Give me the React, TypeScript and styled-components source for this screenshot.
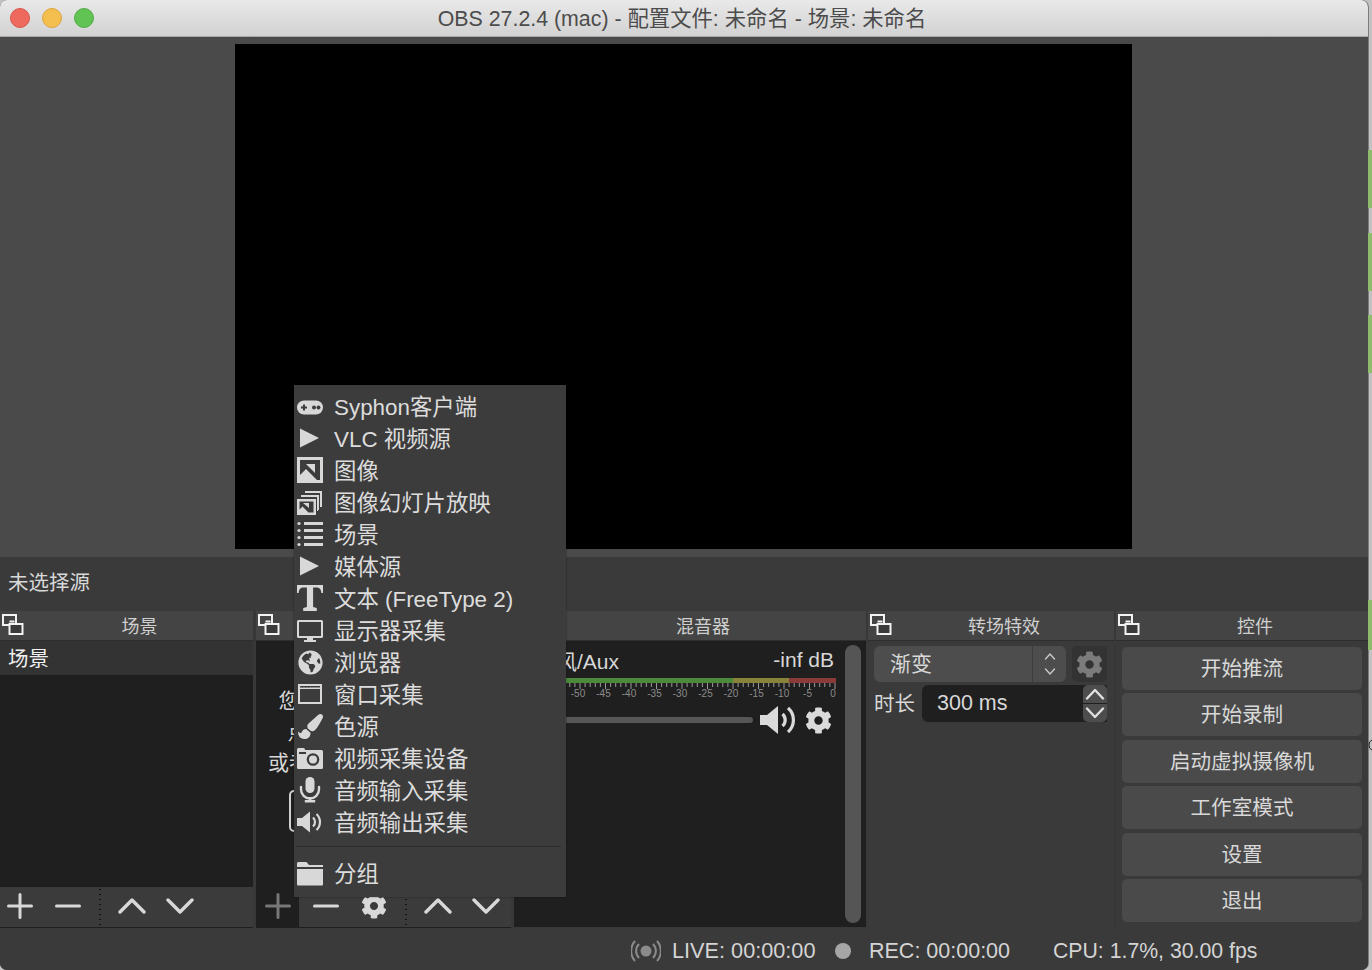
import React from "react";
import styled, { createGlobalStyle } from "styled-components";
import { FaCog, FaGlobeAmericas, FaPaintBrush } from "react-icons/fa";

const Global = createGlobalStyle`
  html, body { margin: 0; padding: 0; background: #bfbfbf; overflow: hidden; }
  body { font-family: "Liberation Sans", "Noto Sans CJK SC", sans-serif; }
  * { box-sizing: border-box; }
`;

const Page = styled.div`
  position: relative;
  display: flex;
  width: 1372px;
  height: 970px;
  background: #c2c2c2;
`;
const Window = styled.div`
  width: 1368px;
  height: 970px;
  display: flex;
  flex-direction: column;
  border-radius: 7px;
  overflow: hidden;
  background: #3a3a3a;
  box-shadow: 1px 0 0 #7d7d7d;
`;
const TitleBar = styled.div`
  height: 37px;
  flex: none;
  display: flex;
  align-items: center;
  padding: 0 98px 1px 10px;
  background: linear-gradient(#e9e9e9, #d2d2d2);
  border-bottom: 1px solid #a9a9a9;
`;
const Lights = styled.div`
  display: flex;
  gap: 12px;
`;
const Light = styled.span<{ $c: string; $b: string }>`
  width: 20px;
  height: 20px;
  border-radius: 50%;
  background: ${(p) => p.$c};
  border: 1px solid ${(p) => p.$b};
`;
const Title = styled.div`
  flex: 1;
  padding-bottom: 2px;
  text-align: center;
  font-size: 21.35px;
  color: #4c4c4c;
`;
const Preview = styled.div`
  height: 520px;
  flex: none;
  background: #4a4a4a;
  padding: 7px 0 0 235px;
`;
const Canvas = styled.div`
  width: 897px;
  height: 505px;
  background: #000;
`;
const ContextBar = styled.div`
  height: 54px;
  flex: none;
  display: flex;
  align-items: center;
  padding: 0 8px 7px;
  background: #3a3a3a;
  font-size: 20.5px;
  color: #d8d8d8;
`;
const Docks = styled.div`
  height: 317px;
  flex: none;
  display: flex;
  background: #383838;
`;
const Dock = styled.section<{ $w: number; $ml?: number }>`
  width: ${(p) => p.$w}px;
  margin-left: ${(p) => p.$ml ?? 0}px;
  flex: none;
  display: flex;
  flex-direction: column;
`;
const DockHead = styled.header`
  position: relative;
  height: 30px;
  flex: none;
  padding: 0 0 2px 26px;
  display: flex;
  align-items: center;
  justify-content: center;
  background: #444;
  border-bottom: 1px solid #2e2e2e;
  font-size: 18px;
  color: #cfcfcf;
`;
const FloatIcon = styled.svg`
  position: absolute;
  left: 0;
  top: 1px;
  width: 25px;
  height: 25px;
`;
const DarkBody = styled.div`
  flex: 1;
  min-height: 0;
  display: flex;
  flex-direction: column;
  background: #1f1f1f;
  overflow: hidden;
`;
const SceneRow = styled.div`
  height: 34px;
  flex: none;
  display: flex;
  align-items: center;
  padding: 0 0 2px 8px;
  background: #333;
  font-size: 20.5px;
  color: #f0f0f0;
`;
const Spacer = styled.div`
  flex: 1;
`;
const Toolbar = styled.div`
  height: 40px;
  flex: none;
  margin-bottom: 1px;
  display: flex;
  align-items: center;
  gap: 8px;
  background: #3b3b3b;
`;
const ToolBtn = styled.div<{ $pressed?: boolean }>`
  width: ${(p) => (p.$pressed ? 43 : 40)}px;
  margin-right: ${(p) => (p.$pressed ? -1 : 0)}px;
  height: 100%;
  padding-bottom: 2px;
  flex: none;
  display: flex;
  align-items: center;
  justify-content: center;
  color: ${(p) => (p.$pressed ? "#777" : "#d8d8d8")};
  background: ${(p) => (p.$pressed ? "#1f1f1f" : "transparent")};
`;
const ToolSep = styled.div`
  width: 8px;
  height: 100%;
  flex: none;
  background: radial-gradient(circle, #111 0.8px, transparent 1px) center top / 2px 5px repeat-y;
`;
const EmptyHint = styled.div`
  padding-top: 44px;
  display: flex;
  flex-direction: column;
  align-items: center;
  text-align: center;
  font-size: 21px;
  line-height: 31px;
  color: #d8d8d8;
  white-space: nowrap;
`;
const HintBox = styled.div`
  width: 190px;
  height: 42px;
  margin-top: 12px;
  border: 2px solid #d0d0d0;
  border-radius: 5px;
`;
const MixerBody = styled(DarkBody)`
  flex-direction: row;
  margin-bottom: 1px;
`;
const Channel = styled.div`
  width: 331px;
  padding: 8px 0 0 8px;
  display: flex;
  flex-direction: column;
`;
const ChannelHead = styled.div`
  height: 26px;
  padding: 0 11px 4px 0;
  display: flex;
  justify-content: space-between;
  align-items: center;
  font-size: 21px;
  color: #d8d8d8;
`;
const ChannelName = styled.span`
  margin-left: -8px;
`;
const Meter = styled.div`
  display: flex;
  width: 314px;
  height: 5px;
  margin-top: 3px;
`;
const MeterPart = styled.div<{ $w: number; $c: string }>`
  width: ${(p) => p.$w}px;
  background: ${(p) => p.$c};
`;
const Scale = styled.svg`
  display: block;
  width: 314px;
  height: 16px;
`;
const FaderRow = styled.div`
  height: 30px;
  margin-top: 6px;
  display: flex;
  align-items: center;
  color: #dadada;
`;
const FaderTrack = styled.div`
  width: 231px;
  height: 6px;
  margin-right: 7px;
  border-radius: 3px;
  background: #565656;
`;
const GearSlot = styled.div`
  margin-left: 9px;
  display: flex;
`;
const ScrollThumb = styled.div`
  width: 16px;
  margin: 4px 0 4px 0;
  border-radius: 8px;
  background: #555;
`;
const TransBody = styled.div`
  flex: 1;
  padding: 5px 7px 0 6px;
  background: #3a3a3a;
  display: flex;
  flex-direction: column;
  gap: 3px;
`;
const TransRow = styled.div`
  display: flex;
  align-items: center;
`;
const Select = styled.div`
  width: 192px;
  height: 36px;
  display: flex;
  background: #4d4d4d;
  border-radius: 6px;
  font-size: 21px;
  color: #d8d8d8;
`;
const SelectText = styled.div`
  width: 159px;
  padding: 0 0 4px 16px;
  display: flex;
  align-items: center;
  border-right: 1px solid #3c3c3c;
`;
const SelectArrows = styled.div`
  flex: 1;
  display: flex;
  align-items: center;
  justify-content: center;
`;
const GearButton = styled.div`
  width: 35px;
  height: 36px;
  margin-left: 6px;
  display: flex;
  align-items: center;
  justify-content: center;
  background: #333;
  border-radius: 5px;
  color: #7b7b7b;
`;
const FieldLabel = styled.div`
  width: 48px;
  padding-bottom: 4px;
  font-size: 20.5px;
  color: #d8d8d8;
`;
const SpinField = styled.div`
  width: 161px;
  height: 37px;
  display: flex;
  align-items: center;
  padding: 0 0 1px 15px;
  background: #1f1f1f;
  border-radius: 6px 0 0 6px;
  font-size: 21.5px;
  color: #d8d8d8;
`;
const SpinButtons = styled.div`
  width: 24px;
  height: 37px;
  display: flex;
  flex-direction: column;
  gap: 1px;
  background: #1f1f1f;
`;
const SpinButton = styled.div<{ $top?: boolean }>`
  flex: 1;
  display: flex;
  align-items: center;
  justify-content: center;
  background: #4d4d4d;
  color: #e0e0e0;
  border-radius: ${(p) => (p.$top ? "5px 5px 0 0" : "0 0 5px 5px")};
`;
const ControlBody = styled.div`
  flex: 1;
  min-height: 0;
  padding: 6px;
  background: #3a3a3a;
  display: grid;
  grid-template-rows: repeat(6, 1fr);
  gap: 3.5px;
`;
const ControlButton = styled.div`
  display: flex;
  align-items: center;
  justify-content: center;
  padding-bottom: 3px;
  background: #4a4a4a;
  border-radius: 5px;
  font-size: 20.6px;
  color: #d8d8d8;
`;
const StatusBar = styled.footer`
  height: 42px;
  flex: none;
  display: flex;
  align-items: center;
  padding-left: 631px;
  padding-top: 4px;
  background: #3a3a3a;
  color: #d4d4d4;
  white-space: nowrap;
`;
const StatusText = styled.span<{ $w: number; $ml: number; $fs: number }>`
  width: ${(p) => p.$w}px;
  margin-left: ${(p) => p.$ml}px;
  font-size: ${(p) => p.$fs}px;
  flex: none;
`;
const RecDot = styled.span`
  width: 16px;
  height: 16px;
  margin-left: 19px;
  border-radius: 50%;
  background: #a6a6a6;
`;
const DesktopMark = styled.div<{ $top: number; $h: number }>`
  position: absolute;
  left: 1368px;
  width: 4px;
  top: ${(p) => p.$top}px;
  height: ${(p) => p.$h}px;
  background: #8fbb6d;
`;
const Cursor = styled.svg`
  position: absolute;
  left: 1368px;
  top: 738px;
  width: 4px;
  height: 14px;
`;
const Menu = styled.div`
  position: absolute;
  left: 294px;
  top: 385px;
  width: 272px;
  height: 512px;
  padding: 5px 0 7px;
  background: #3c3c3c;
  box-shadow: 0 0 2px rgba(0, 0, 0, 0.4);
`;
const MenuRow = styled.div`
  height: 32px;
  display: flex;
  align-items: center;
  gap: 11px;
  padding-left: 3px;
  font-size: 22.4px;
  color: #dcdcdc;
  white-space: nowrap;
`;
const MenuLabel = styled.span`
  padding-bottom: 3px;
`;
const MenuIcon = styled.div`
  width: 26px;
  height: 26px;
  flex: none;
  display: flex;
  align-items: center;
  justify-content: center;
  color: #d8d8d8;
`;
const MenuSep = styled.div`
  height: 1px;
  margin: 8px 5px 10px 2px;
  background: #2c2c2c;
`;

const S = (p: { children: React.ReactNode }) => (
  <svg width="26" height="26" viewBox="0 0 26 26" fill="currentColor">
    {p.children}
  </svg>
);

const D = "#3c3c3c";
const Icons: Record<string, React.ReactNode> = {
  pad: (
    <S>
      <rect x="0" y="7.500" width="26" height="14" rx="7" />
      <path d="M4 13.500h2v-2h2v2h2v2H8v2H6v-2H4z" fill={D} />
      <circle cx="17" cy="14.500" r="2" fill={D} />
      <circle cx="21.500" cy="14.500" r="2" fill={D} />
    </S>
  ),
  play: (
    <S>
      <path d="M3 3.500 22 13 3 22.500z" />
    </S>
  ),
  image: (
    <S>
      <path fillRule="evenodd" d="M0 0h26v26H0zM3 3v15l6-6 11 11h3V3z" />
      <path d="M9 7h9v9z" />
    </S>
  ),
  images: (
    <S>
      <path d="M0 10h19v16H0z" />
      <path d="M2.500 12.500v8l3-3 6 6h5v-11z" fill={D} />
      <path d="M6 14h6v5z" />
      <path d="M4 8V6h17v16h-1V8zM8 4V2h17v16h-2V4z" />
      <path d="M23 2h2v15h-2zM21 6h1v15h-1z" />
    </S>
  ),
  list: (
    <S>
      <circle cx="2" cy="2.500" r="1.600" />
      <circle cx="2" cy="9.500" r="1.600" />
      <circle cx="2" cy="16.500" r="1.600" />
      <circle cx="2" cy="23.500" r="1.600" />
      <path d="M7 1h19v3H7zM7 8h19v3H7zM7 15h19v3H7zM7 22h19v3H7z" />
    </S>
  ),
  text: (
    <S>
      <path d="M0 0h26v8h-1.600c-.3-3.200-1.600-5.400-5-5.400h-3.300v19.500l3.700.9V26H6.200v-3l3.700-.9V2.600H6.600c-3.400 0-4.700 2.200-5 5.400H0z" />
    </S>
  ),
  monitor: (
    <S>
      <path
        fillRule="evenodd"
        d="M1.500 3h23a1.500 1.500 0 0 1 1.500 1.500v15a1.500 1.500 0 0 1-1.500 1.500H16v2h3v2H7v-2h3v-2H1.500A1.500 1.500 0 0 1 0 19.500v-15A1.500 1.500 0 0 1 1.500 3zM2 5v14h22V5z"
      />
    </S>
  ),
  window: (
    <S>
      <path fillRule="evenodd" d="M1 3h24v20H1zM3 8v13h20V8zM3 5v1.500h20V5z" />
      <path d="M5 5h1v1.500H5zM8 5h1v1.500H8zM11 5h1v1.500h-1z" fill={D} />
    </S>
  ),
  camera: (
    <S>
      <path d="M0 5V4.500A1.500 1.500 0 0 1 1.500 3h5A1.500 1.500 0 0 1 8 4.500V5h16.500A1.500 1.500 0 0 1 26 6.500v16a1.500 1.500 0 0 1-1.500 1.500h-23A1.500 1.500 0 0 1 0 22.500z" />
      <circle cx="16" cy="14.500" r="6.300" fill={D} />
      <circle cx="16" cy="14.500" r="4" />
      <path d="M2 7h7v2H2z" fill={D} />
    </S>
  ),
  mic: (
    <S>
      <rect x="8.500" y="0" width="9" height="16" rx="4.500" />
      <path
        d="M4 10v2.500a9 9 0 0 0 18 0V10"
        fill="none"
        stroke="currentColor"
        strokeWidth="2.400"
        strokeLinecap="round"
      />
      <path d="M11.800 20h2.400v3h4v2.500H7.800V23h4z" />
    </S>
  ),
  speaker: (
    <S>
      <path d="M0 9h5l8-6.500v21L5 17H0z" />
      <path
        d="M16 8.500a6 6 0 0 1 0 9M19.500 5a11 11 0 0 1 0 16"
        fill="none"
        stroke="currentColor"
        strokeWidth="2.200"
      />
    </S>
  ),
  folder: (
    <S>
      <path d="M0 3.500A1.500 1.500 0 0 1 1.500 2h8L12 5h14v2H0z" />
      <path d="M0 9h26v15.500a1 1 0 0 1-1 1H1a1 1 0 0 1-1-1z" />
    </S>
  ),
};

const menu: [string, React.ReactNode][] = [
  ["Syphon客户端", Icons.pad],
  ["VLC 视频源", Icons.play],
  ["图像", Icons.image],
  ["图像幻灯片放映", Icons.images],
  ["场景", Icons.list],
  ["媒体源", Icons.play],
  ["文本 (FreeType 2)", Icons.text],
  ["显示器采集", Icons.monitor],
  ["浏览器", <FaGlobeAmericas size={25} />],
  ["窗口采集", Icons.window],
  ["色源", <FaPaintBrush size={25} />],
  ["视频采集设备", Icons.camera],
  ["音频输入采集", Icons.mic],
  ["音频输出采集", Icons.speaker],
];

const Float = () => (
  <FloatIcon viewBox="0 0 25 25">
    <rect x="3" y="3" width="13" height="10" fill="none" stroke="#f2f2f2" strokeWidth="2" />
    <rect x="9.500" y="12" width="13" height="10" fill="#3a3a3a" stroke="#f2f2f2" strokeWidth="2" />
    <path d="M9.500 9.500h5" stroke="#f2f2f2" strokeWidth="2" />
  </FloatIcon>
);

const Plus = () => (
  <svg width="26" height="26" viewBox="0 0 26 26" stroke="currentColor" strokeWidth="3" strokeLinecap="round">
    <path d="M13 1.500v23M1.500 13h23" />
  </svg>
);
const Minus = () => (
  <svg width="26" height="26" viewBox="0 0 26 26" stroke="currentColor" strokeWidth="3" strokeLinecap="round">
    <path d="M1.500 13h23" />
  </svg>
);
const Up = () => (
  <svg width="28" height="18" viewBox="0 0 28 18" fill="none" stroke="currentColor" strokeWidth="3.400" strokeLinecap="round" strokeLinejoin="round">
    <path d="M2 15 14 3l12 12" />
  </svg>
);
const Down = () => (
  <svg width="28" height="18" viewBox="0 0 28 18" fill="none" stroke="currentColor" strokeWidth="3.400" strokeLinecap="round" strokeLinejoin="round">
    <path d="M2 3l12 12L26 3" />
  </svg>
);
const SmallUp = () => (
  <svg width="20" height="12" viewBox="0 0 20 12" fill="none" stroke="currentColor" strokeWidth="2.400" strokeLinecap="round" strokeLinejoin="round">
    <path d="M2 10.500 10 2l8 8.500" />
  </svg>
);
const SmallDown = () => (
  <svg width="20" height="12" viewBox="0 0 20 12" fill="none" stroke="currentColor" strokeWidth="2.400" strokeLinecap="round" strokeLinejoin="round">
    <path d="M2 1.500 10 10l8-8.500" />
  </svg>
);

const Ticks = () => {
  const marks = [];
  for (let i = 0; i <= 60; i++) {
    const x = 313 - i * 5.1;
    const major = i % 5 === 0;
    marks.push(
      <line key={i} x1={x} x2={x} y1={0} y2={major ? 6 : 4} stroke="#9a9a9a" strokeWidth="1" />
    );
  }
  const labels = [0, 5, 10, 15, 20, 25, 30, 35, 40, 45, 50, 55];
  return (
    <Scale viewBox="0 0 314 16">
      {marks}
      {labels.map((v) => (
        <text
          key={v}
          x={311 - v * 5.1}
          y={14}
          fontSize="10"
          textAnchor="middle"
          fill="#8c8c8c"
          fontFamily="Liberation Sans"
        >
          {v === 0 ? "0" : `-${v}`}
        </text>
      ))}
    </Scale>
  );
};

const LiveIcon = () => (
  <svg width="30" height="24" viewBox="0 0 30 24" fill="none" stroke="#8b8b8b" strokeWidth="2">
    <circle cx="15" cy="12" r="5.500" fill="#8b8b8b" stroke="none" />
    <path d="M8 5a10 10 0 0 0 0 14M22 5a10 10 0 0 1 0 14M4 2a15 15 0 0 0 0 20M26 2a15 15 0 0 1 0 20" />
  </svg>
);

const controls = ["开始推流", "开始录制", "启动虚拟摄像机", "工作室模式", "设置", "退出"];

export default function App() {
  return (
    <Page>
      <Global />
      <Window>
        <TitleBar>
          <Lights>
            <Light $c="#ee6a5f" $b="#d9564c" />
            <Light $c="#f5bf4f" $b="#dca53a" />
            <Light $c="#61c354" $b="#52ad45" />
          </Lights>
          <Title>OBS 27.2.4 (mac) - 配置文件: 未命名 - 场景: 未命名</Title>
        </TitleBar>
        <Preview>
          <Canvas />
        </Preview>
        <ContextBar>未选择源</ContextBar>
        <Docks>
          <Dock $w={253}>
            <DockHead>
              <Float />
              场景
            </DockHead>
            <DarkBody>
              <SceneRow>场景</SceneRow>
              <Spacer />
              <Toolbar>
                <ToolBtn><Plus /></ToolBtn>
                <ToolBtn><Minus /></ToolBtn>
                <ToolSep />
                <ToolBtn><Up /></ToolBtn>
                <ToolBtn><Down /></ToolBtn>
              </Toolbar>
            </DarkBody>
          </Dock>
          <Dock $w={255} $ml={3}>
            <DockHead>
              <Float />
              来源
            </DockHead>
            <DarkBody>
              <EmptyHint>
                <div>您还没有添加任何源，</div>
                <div>点击下面的 + 按钮，</div>
                <div>或者右击此处添加一个。</div>
                <HintBox />
              </EmptyHint>
              <Spacer />
              <Toolbar>
                <ToolBtn $pressed><Plus /></ToolBtn>
                <ToolBtn><Minus /></ToolBtn>
                <ToolBtn><FaCog size={26} /></ToolBtn>
                <ToolSep />
                <ToolBtn><Up /></ToolBtn>
                <ToolBtn><Down /></ToolBtn>
              </Toolbar>
            </DarkBody>
          </Dock>
          <Dock $w={352} $ml={3}>
            <DockHead>
              <Float />
              混音器
            </DockHead>
            <MixerBody>
              <Channel>
                <ChannelHead>
                  <ChannelName>麦克风/Aux</ChannelName>
                  <span>-inf dB</span>
                </ChannelHead>
                <Meter>
                  <MeterPart $w={211} $c="#4b8a3b" />
                  <MeterPart $w={56} $c="#87843a" />
                  <MeterPart $w={47} $c="#8a3a38" />
                </Meter>
                <Ticks />
                <FaderRow>
                  <FaderTrack />
                  <svg width="36" height="30" viewBox="0 0 36 30" fill="currentColor">
                    <path d="M0 10h7l11-9v28L7 20H0z" />
                    <path d="M22.500 9a8 8 0 0 1 0 12M28 3a16 16 0 0 1 0 24" fill="none" stroke="currentColor" strokeWidth="3.200" />
                  </svg>
                  <GearSlot><FaCog size={27} /></GearSlot>
                </FaderRow>
              </Channel>
              <ScrollThumb />
            </MixerBody>
          </Dock>
          <Dock $w={246} $ml={2}>
            <DockHead>
              <Float />
              转场特效
            </DockHead>
            <TransBody>
              <TransRow>
                <Select>
                  <SelectText>渐变</SelectText>
                  <SelectArrows>
                    <svg width="12" height="26" viewBox="0 0 12 26" fill="none" stroke="#c8c8c8" strokeWidth="1.400" strokeLinecap="round" strokeLinejoin="round">
                      <path d="M1.500 8 6 3l4.500 5M1.500 18 6 23l4.500-5" />
                    </svg>
                  </SelectArrows>
                </Select>
                <GearButton><FaCog size={27} /></GearButton>
              </TransRow>
              <TransRow>
                <FieldLabel>时长</FieldLabel>
                <SpinField>300 ms</SpinField>
                <SpinButtons>
                  <SpinButton $top><SmallUp /></SpinButton>
                  <SpinButton><SmallDown /></SpinButton>
                </SpinButtons>
              </TransRow>
            </TransBody>
          </Dock>
          <Dock $w={252} $ml={2}>
            <DockHead>
              <Float />
              控件
            </DockHead>
            <ControlBody>
              {controls.map((c) => (
                <ControlButton key={c}>{c}</ControlButton>
              ))}
            </ControlBody>
          </Dock>
        </Docks>
        <StatusBar>
          <LiveIcon />
          <StatusText $w={144} $ml={11} $fs={21.7}>LIVE: 00:00:00</StatusText>
          <RecDot />
          <StatusText $w={142} $ml={18} $fs={21.5}>REC: 00:00:00</StatusText>
          <StatusText $w={210} $ml={42} $fs={21.25}>CPU: 1.7%, 30.00 fps</StatusText>
        </StatusBar>
      </Window>
      <DesktopMark $top={150} $h={58} />
      <DesktopMark $top={233} $h={58} />
      <DesktopMark $top={315} $h={58} />
      <DesktopMark $top={600} $h={50} />
      <Cursor viewBox="0 0 4 14">
        <path d="M4 2a5 5 0 0 0-3 5 5 5 0 0 0 3 5" fill="none" stroke="#222" strokeWidth="1" />
      </Cursor>
      <Menu>
        {menu.map(([label, icon]) => (
          <MenuRow key={label}>
            <MenuIcon>{icon}</MenuIcon>
            <MenuLabel>{label}</MenuLabel>
          </MenuRow>
        ))}
        <MenuSep />
        <MenuRow>
          <MenuIcon>{Icons.folder}</MenuIcon>
          <MenuLabel>分组</MenuLabel>
        </MenuRow>
      </Menu>
    </Page>
  );
}
